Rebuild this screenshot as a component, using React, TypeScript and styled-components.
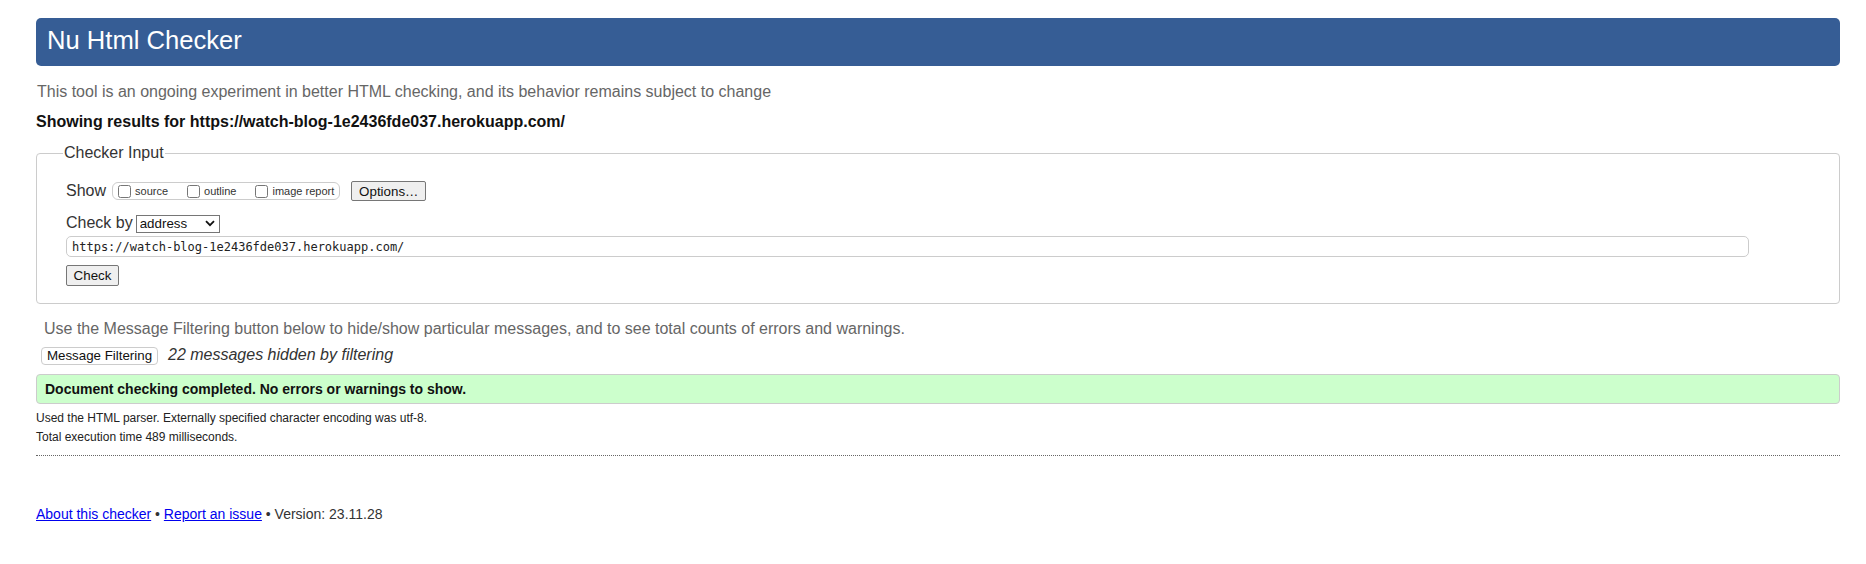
import React from "react";
import styled, { createGlobalStyle } from "styled-components";

const Global = createGlobalStyle`
  html, body { margin: 0; padding: 0; background: #fff; }
  body { font-family: "Liberation Sans", Arial, sans-serif; color: #222; }
`;

const Page = styled.div`
  padding: 18px 26px 40px 36px;
  font-size: 16px;
`;

const Header = styled.h1`
  margin: 0;
  height: 48px;
  box-sizing: border-box;
  padding: 0 10px 4px 11px;
  line-height: 44px;
  font-size: 25.6px;
  font-weight: normal;
  color: #fff;
  background: #365d95;
  border-radius: 5px;
`;

const Intro = styled.p`
  margin: 17px 0 0 1px;
  color: #666;
  line-height: 18px;
`;

const Results = styled.p`
  margin: 12px 0 0 0;
  font-weight: bold;
  color: #111;
  line-height: 18px;
`;

const InputSet = styled.fieldset`
  margin: 12px 0 0 0;
  padding: 18px 29px 17px 29px;
  border: 1px solid #ccc;
  border-radius: 4px;
  min-width: 0;
`;

const Legend = styled.legend`
  padding: 0 1px;
  margin-left: -3px;
  line-height: 20px;
  color: #333;
`;

const Row = styled.div<{ $gap?: number }>`
  display: flex;
  align-items: center;
  margin-top: ${(p) => p.$gap ?? 0}px;
`;

const RowLabel = styled.span`
  color: #333;
  line-height: 18px;
`;

const OptionGroup = styled.span`
  display: inline-flex;
  align-items: center;
  height: 18px;
  box-sizing: border-box;
  margin-left: 6px;
  padding: 0 5px;
  border: 1px solid #ccc;
  border-radius: 6px;
`;

const CheckLabel = styled.label<{ $last?: boolean }>`
  display: inline-flex;
  align-items: center;
  font-size: 11px;
  color: #333;
  margin-right: ${(p) => (p.$last ? 0 : 19)}px;
  input {
    width: 13px;
    height: 13px;
    margin: 0 4px 0 0;
  }
`;

const Button = styled.button<{ $w: number; $h: number }>`
  box-sizing: border-box;
  width: ${(p) => p.$w}px;
  height: ${(p) => p.$h}px;
  padding: 0;
  font-family: "Liberation Sans", Arial, sans-serif;
  font-size: 13.33px;
  color: #111;
  background: #efefef;
  border: 1px solid #767676;
  border-radius: 2px;
`;

const OptionsButton = styled(Button)`
  margin-left: 11px;
`;

const SelectWrap = styled.span`
  position: relative;
  display: inline-block;
  margin-left: 3px;
  width: 84px;
  height: 18px;
`;

const Select = styled.select`
  appearance: none;
  box-sizing: border-box;
  width: 84px;
  height: 18px;
  padding: 0 0 0 3px;
  font-family: "Liberation Sans", Arial, sans-serif;
  font-size: 13.33px;
  color: #111;
  background: #fff;
  border: 1px solid #767676;
  border-radius: 0;
`;

const Chevron = styled.svg`
  position: absolute;
  right: 5px;
  top: 6px;
  pointer-events: none;
`;

const UrlInput = styled.input`
  display: block;
  box-sizing: border-box;
  width: calc(100% - 61px);
  height: 21px;
  margin-top: 4px;
  padding: 0 5px;
  font-family: "DejaVu Sans Mono", "Liberation Mono", monospace;
  font-size: 12px;
  color: #222;
  border: 1px solid #ccc;
  border-radius: 5px;
  outline: none;
`;

const CheckButton = styled(Button)`
  display: block;
  margin-top: 8px;
`;

const FilterNote = styled.p`
  margin: 16px 0 0 8px;
  color: #666;
  line-height: 18px;
`;

const FilterRow = styled.div`
  display: flex;
  align-items: baseline;
  margin: 8px 0 0 5px;
`;

const FilterButton = styled.button`
  box-sizing: border-box;
  height: 18px;
  width: 117px;
  padding: 0;
  font-family: "Liberation Sans", Arial, sans-serif;
  font-size: 13.33px;
  color: #111;
  background: #fff;
  border: 1px solid #ccc;
  border-radius: 4px;
`;

const HiddenCount = styled.span`
  margin-left: 10px;
  font-style: italic;
  color: #333;
`;

const Success = styled.p`
  margin: 9px 0 0 0;
  padding: 6px 8px;
  line-height: 16px;
  font-size: 14px;
  font-weight: bold;
  color: #111;
  background: #ccffcc;
  border: 1px solid #ccc;
  border-radius: 4px;
`;

const Details = styled.p<{ $first?: boolean }>`
  margin: ${(p) => (p.$first ? 5 : 0)}px 0 0 0;
  font-size: 12px;
  line-height: 19px;
  color: #222;
`;

const Rule = styled.hr`
  margin: 8px 0 0 0;
  border: 0;
  border-top: 1px dotted #666;
  height: 0;
`;

const Footer = styled.p`
  margin: 50px 0 0 0;
  font-size: 14px;
  color: #333;
`;

const Link = styled.a`
  color: #0000ee;
  text-decoration: underline;
`;

export default function App() {
  const url = "https://watch-blog-1e2436fde037.herokuapp.com/";
  return (
    <>
      <Global />
      <Page>
        <Header>Nu Html Checker</Header>
        <Intro>
          This tool is an ongoing experiment in better HTML checking, and its behavior remains subject to change
        </Intro>
        <Results>Showing results for {url}</Results>
        <InputSet>
          <Legend>Checker Input</Legend>
          <Row>
            <RowLabel>Show</RowLabel>
            <OptionGroup>
              <CheckLabel>
                <input type="checkbox" />
                source
              </CheckLabel>
              <CheckLabel>
                <input type="checkbox" />
                outline
              </CheckLabel>
              <CheckLabel $last>
                <input type="checkbox" />
                image report
              </CheckLabel>
            </OptionGroup>
            <OptionsButton $w={75} $h={20}>Options…</OptionsButton>
          </Row>
          <Row $gap={13}>
            <RowLabel>Check by</RowLabel>
            <SelectWrap>
              <Select defaultValue="address">
                <option value="address">address</option>
                <option value="file">file upload</option>
                <option value="text">text input</option>
              </Select>
              <Chevron width="10" height="7" viewBox="0 0 10 7">
                <path d="M1 1.2 L5 5.2 L9 1.2" fill="none" stroke="#111" strokeWidth="1.8" />
              </Chevron>
            </SelectWrap>
          </Row>
          <UrlInput defaultValue={url} />
          <CheckButton $w={53} $h={21}>Check</CheckButton>
        </InputSet>
        <FilterNote>
          Use the Message Filtering button below to hide/show particular messages, and to see total counts of errors and warnings.
        </FilterNote>
        <FilterRow>
          <FilterButton>Message Filtering</FilterButton>
          <HiddenCount>22 messages hidden by filtering</HiddenCount>
        </FilterRow>
        <Success>Document checking completed. No errors or warnings to show.</Success>
        <Details $first>Used the HTML parser. Externally specified character encoding was utf-8.</Details>
        <Details>Total execution time 489 milliseconds.</Details>
        <Rule />
        <Footer>
          <Link href="#about">About this checker</Link> • <Link href="#report">Report an issue</Link> • Version: 23.11.28
        </Footer>
      </Page>
    </>
  );
}
